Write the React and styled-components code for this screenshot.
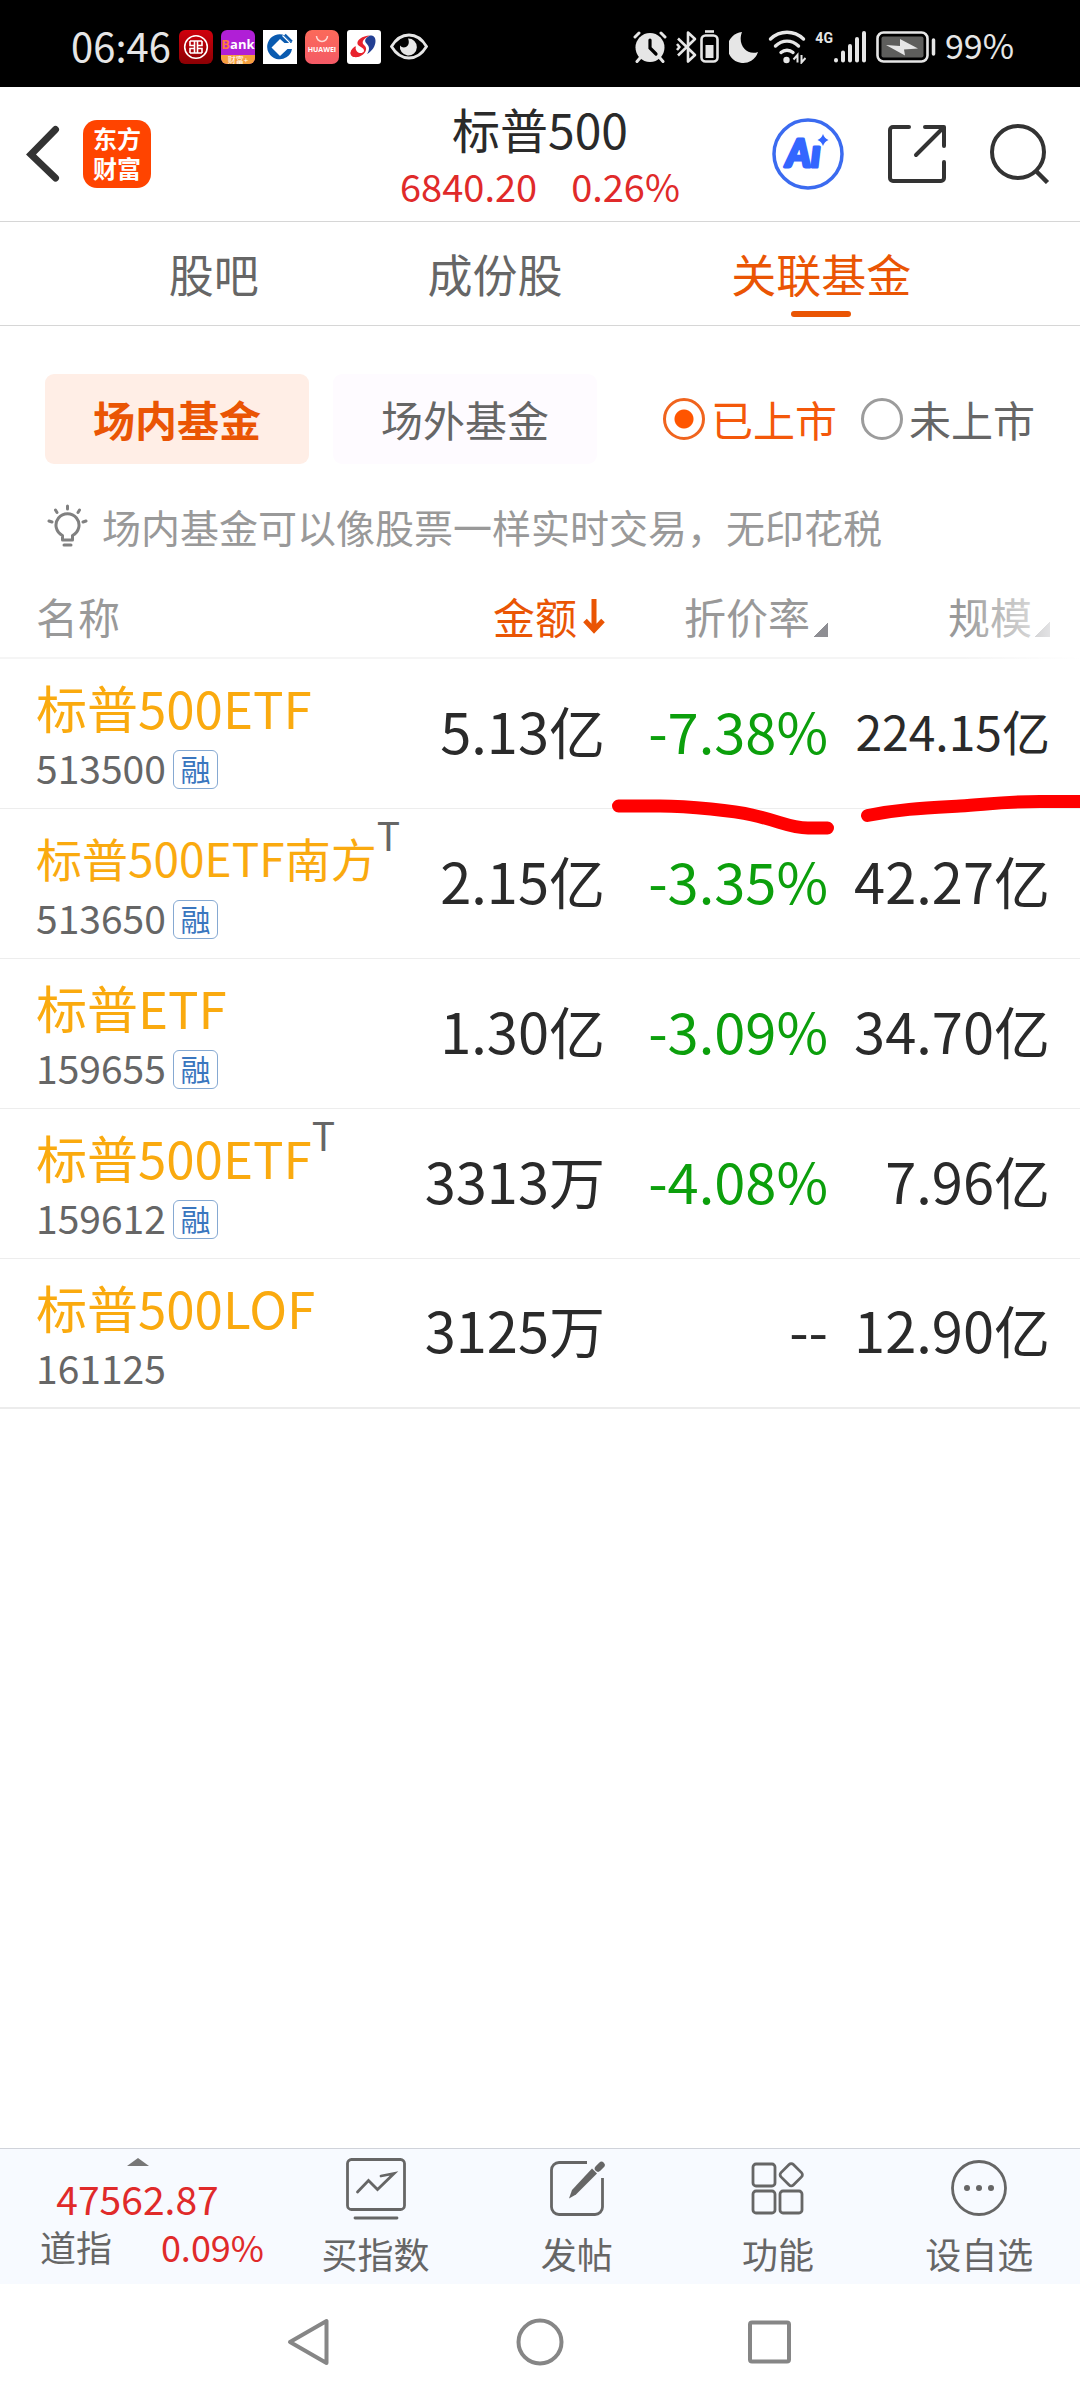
import React, { useState } from "react";
import styled, { createGlobalStyle } from "styled-components";

const orange = "#ea5504";
const red = "#e02a2a";
const grey = "#666666";

const GlobalStyle = createGlobalStyle`
  *, *::before, *::after { box-sizing: border-box; }
  body { margin: 0; background: #ffffff; }
  body, button, input { font-family: "Noto Sans CJK SC", "Noto Sans", sans-serif; }
  button { border: 0; padding: 0; margin: 0; background: none; color: inherit; cursor: pointer; }
  svg { display: block; flex: none; }
`;

const Page = styled.div`
  display: flex;
  flex-direction: column;
  min-height: 100vh;
  background: #ffffff;
  color: #2a2a2a;
  white-space: nowrap;
`;

/* ---------- status bar ---------- */

const StatusBar = styled.div`
  display: flex;
  justify-content: space-between;
  height: 87px;
  padding: 6px 66px 0 71px;
  background: #000000;
  color: #e6e6e6;
`;

const StatusGroup = styled.div`
  display: flex;
  align-items: center;
  gap: ${(p) => p.$gap}px;
`;

const Clock = styled.time`
  font-size: 40px;
  line-height: 44px;
  padding-bottom: 4px;
`;

const BatteryLevel = styled.span`
  font-size: 34px;
  line-height: 44px;
  padding-bottom: 4px;
`;

const AppTile = styled.span`
  display: flex;
  flex-direction: column;
  align-items: center;
  justify-content: ${(p) => p.$justify || "center"};
  width: 34px;
  height: 34px;
  overflow: hidden;
  border-radius: ${(p) => p.$radius}px;
  background: ${(p) => p.$bg};
  color: #ffffff;
`;

const BankWord = styled.span`
  font: 700 13px/22px "Open Sans", sans-serif;
  padding-top: 3px;
`;

const BankInitial = styled.span`
  color: #ff7a3c;
`;

const BankStrip = styled.span`
  width: 100%;
  font-size: 8px;
  line-height: 9px;
  text-align: center;
  background: #f5a03c;
`;

const HuaweiWord = styled.span`
  font: 700 7px/8px "Open Sans", sans-serif;
`;

const SignalGroup = styled.div`
  display: flex;
  align-items: flex-start;
`;

const Network = styled.span`
  font: 700 14px/16px Roboto, sans-serif;
`;

/* ---------- title bar ---------- */

const TitleBar = styled.header`
  display: grid;
  grid-template-columns: 1fr auto 1fr;
  align-items: center;
  height: 135px;
  padding: 0 26px;
  border-bottom: 1px solid #d6d6d6;
`;

const TitleSide = styled.div`
  display: flex;
  align-items: center;
  justify-content: ${(p) => (p.$end ? "flex-end" : "flex-start")};
  gap: ${(p) => p.$gap}px;
  padding-right: ${(p) => (p.$end ? 4 : 0)}px;
`;

const BrandLogo = styled.a`
  width: 68px;
  height: 68px;
  padding-top: 5px;
  border-radius: 14px;
  background: #ff4400;
  color: #ffffff;
  font-family: "Liberation Sans", "Noto Sans CJK SC", sans-serif;
  font-size: 24px;
  font-weight: 700;
  line-height: 30px;
  text-align: center;
  text-decoration: none;
`;

const TitleBlock = styled.div`
  display: flex;
  flex-direction: column;
  align-items: center;
  gap: 8px;
`;

const Title = styled.h1`
  margin: 0;
  font-size: 48px;
  font-weight: 400;
  line-height: 56px;
`;

const Quote = styled.div`
  display: flex;
  gap: 34px;
  color: ${red};
  font-size: 38px;
  line-height: 44px;
`;

/* ---------- tabs ---------- */

const Tabs = styled.nav`
  display: flex;
  justify-content: space-evenly;
  height: 104px;
  border-bottom: 1px solid #d6d6d6;
`;

const Tab = styled.button`
  position: relative;
  color: ${(p) => (p.$active ? orange : grey)};
  font-size: 45px;
  line-height: 60px;

  &::after {
    content: "";
    display: ${(p) => (p.$active ? "block" : "none")};
    position: absolute;
    bottom: 8px;
    left: 50%;
    width: 60px;
    height: 6px;
    margin-left: -30px;
    border-radius: 3px;
    background: ${orange};
  }
`;

/* ---------- filters ---------- */

const Filters = styled.div`
  display: flex;
  align-items: center;
  justify-content: space-between;
  padding: 48px 45px 0;
`;

const FilterGroup = styled.div`
  display: flex;
  gap: 24px;
`;

const Pill = styled.button`
  width: 264px;
  height: 90px;
  border-radius: 9px;
  background: ${(p) => (p.$active ? "#ffeee6" : "#fefbff")};
  color: ${(p) => (p.$active ? orange : grey)};
  font-size: 42px;
  font-weight: ${(p) => (p.$active ? 700 : 400)};
  line-height: 60px;
`;

const RadioLabel = styled.label`
  display: flex;
  align-items: center;
  gap: 6px;
  color: ${(p) => (p.$active ? "#f4580a" : grey)};
  font-size: 42px;
  line-height: 60px;
`;

const Radio = styled.input`
  appearance: none;
  width: 42px;
  height: 42px;
  margin: 0;
  border: 3px solid #9c9c9c;
  border-radius: 50%;

  &:checked {
    border-color: #f0641e;
    background: radial-gradient(circle, #ff5500 9px, transparent 10px);
  }
`;

const Hint = styled.p`
  display: flex;
  align-items: center;
  gap: 13px;
  margin: 0;
  padding: 38px 45px 24px;
  color: #999999;
  font-size: 39px;
  line-height: 48px;
`;

/* ---------- fund table ---------- */

const Main = styled.main`
  flex: 1;
`;

const TableArea = styled.section`
  position: relative;
  overflow: hidden;
`;

const FundTable = styled.table`
  width: 100%;
  table-layout: fixed;
  border-spacing: 0;
`;

const HeadCell = styled.th`
  width: ${(p) => p.$width || "auto"};
  height: 85px;
  padding: 0 ${(p) => p.$right || 0}px 0 ${(p) => p.$left || 0}px;
  border-bottom: 2px solid #f5f5f5;
  color: #999999;
  font-size: 42px;
  font-weight: 400;
  line-height: 60px;
  text-align: left;
`;

const SortButton = styled.button`
  display: flex;
  align-items: center;
  gap: ${(p) => (p.$active ? 6 : 3)}px;
  margin-left: auto;
  color: ${(p) => (p.$active ? orange : "#999999")};
  font-size: 42px;
  line-height: 60px;
`;

const Corner = styled.span`
  align-self: flex-end;
  width: 15px;
  height: 15px;
  margin-bottom: 9px;
  background: linear-gradient(135deg, transparent 50%, #8e8e93 50%);
`;

const HeadFade = styled.div`
  position: absolute;
  top: 0;
  right: 0;
  width: 120px;
  height: 85px;
  background: linear-gradient(90deg, rgba(255, 255, 255, 0), #ffffff);
  pointer-events: none;
`;

const Row = styled.tr`
  &:last-child td { border-bottom: 2px solid #ececec; }
`;

const NameCell = styled.td`
  height: 150px;
  padding: 0 0 0 36px;
  border-bottom: 1px solid #ededed;
  vertical-align: top;
`;

const NameLine = styled.div`
  display: flex;
  align-items: flex-end;
  height: 78px;
`;

const FundName = styled.a`
  color: #faaa0f;
  font-size: ${(p) => (p.$long ? 46 : 51)}px;
  line-height: 60px;
  text-decoration: none;
`;

const TradeMark = styled.span`
  align-self: flex-start;
  color: ${grey};
  font-size: 39px;
  line-height: 50px;
`;

const CodeLine = styled.div`
  display: flex;
  align-items: center;
  gap: 7px;
  padding-top: 6px;
  color: ${grey};
  font-size: 39px;
  line-height: 48px;
`;

const Badge = styled.span`
  width: 45px;
  height: 39px;
  margin-top: 5px;
  border: 1px solid #86a9d2;
  border-radius: 6px;
  color: #3a76be;
  font-size: 30px;
  line-height: 34px;
  text-align: center;
`;

const ValueCell = styled.td`
  height: 150px;
  padding: 0 ${(p) => p.$right || 0}px 8px 0;
  border-bottom: 1px solid #ededed;
  color: ${(p) => (p.$down ? "#0c9f0c" : "#2a2a2a")};
  font-size: ${(p) => (p.$long ? 48 : 56)}px;
  line-height: 64px;
  text-align: right;
`;

const MarkerStrokes = styled.svg`
  position: absolute;
  top: 216px;
  right: 0;
  pointer-events: none;
`;

/* ---------- bottom bar ---------- */

const BottomBar = styled.footer`
  display: flex;
  height: 136px;
  border-top: 1px solid #d0d3da;
  background: #f7faff;
`;

const IndexPanel = styled.button`
  display: flex;
  flex-direction: column;
  align-items: center;
  width: 275px;
  padding-top: 9px;
  font-size: 39px;
  line-height: 44px;
`;

const IndexValue = styled.span`
  padding-top: 10px;
  color: ${red};
`;

const IndexLine = styled.span`
  display: flex;
  justify-content: space-between;
  width: 100%;
  padding: 4px 11px 0 40px;
  color: ${grey};
  font-size: 36px;
`;

const Rise = styled.span`
  color: ${red};
`;

const Action = styled.button`
  display: flex;
  flex: 1;
  flex-direction: column;
  align-items: center;
  gap: 11px;
  padding-top: 9px;
  color: ${grey};
  font-size: 36px;
  line-height: 44px;
`;

const SystemNav = styled.nav`
  display: flex;
  align-items: center;
  justify-content: center;
  gap: 182px;
  height: 116px;
`;

/* ---------- data ---------- */

const funds = [
  { name: "标普500ETF", code: "513500", margin: true, amount: "5.13亿", rate: "-7.38%", size: "224.15亿" },
  { name: "标普500ETF南方", code: "513650", margin: true, mark: true, amount: "2.15亿", rate: "-3.35%", size: "42.27亿" },
  { name: "标普ETF", code: "159655", margin: true, amount: "1.30亿", rate: "-3.09%", size: "34.70亿" },
  { name: "标普500ETF", code: "159612", margin: true, mark: true, amount: "3313万", rate: "-4.08%", size: "7.96亿" },
  { name: "标普500LOF", code: "161125", amount: "3125万", rate: "--", size: "12.90亿" },
];

const actions = [
  {
    label: "买指数",
    icon: (
      <g>
        <rect x="1.5" y="1.5" width="57" height="50" rx="4" />
        <path d="M9 60h42" strokeLinecap="round" />
        <path d="M11.500 34 22.500 22.500 31.500 31.500 48 15.500 35 18" strokeLinecap="round" />
      </g>
    ),
  },
  {
    label: "发帖",
    icon: (
      <g>
        <path d="M40 4.500H12a7.500 7.500 0 0 0-7.500 7.500v37a7.500 7.500 0 0 0 7.500 7.500h36a7.500 7.500 0 0 0 7.500-7.500V20" />
        <path d="M45 10.500 50 15.500 29 36.500 22 40.500 25 32z" fill={grey} stroke="none" />
        <path d="M51 10.500 54.500 7" strokeWidth="6.500" strokeLinecap="round" />
      </g>
    ),
  },
  {
    label: "功能",
    icon: (
      <g>
        <rect x="5" y="6" width="22" height="22" rx="3" />
        <rect x="5" y="33" width="22" height="22" rx="3" />
        <rect x="32" y="33" width="22" height="22" rx="3" />
        <rect x="34.500" y="8" width="17.500" height="17.500" rx="3" transform="rotate(45 43.250 16.750)" />
      </g>
    ),
  },
  {
    label: "设自选",
    icon: (
      <g>
        <circle cx="30" cy="30" r="26.500" />
        <g fill={grey} stroke="none">
          <circle cx="18" cy="30" r="3" />
          <circle cx="30" cy="30" r="3" />
          <circle cx="42" cy="30" r="3" />
        </g>
      </g>
    ),
  },
];

/* ---------- status icons ---------- */

function LeftStatus() {
  return (
    <StatusGroup $gap={8}>
      <Clock>06:46</Clock>
      <AppTile $bg="linear-gradient(#d0000c, #8c0004)" $radius={6}>
        <svg width="26" height="26" viewBox="0 0 26 26" fill="none" stroke="#fff">
          <circle cx="13" cy="13" r="11.300" strokeWidth="1.600" />
          <path d="M7 7h12M7 19h12M7 7v4.500h4.500V7M19 7v4.500h-4.500V7M7 19v-4.500h4.500V19M19 19v-4.500h-4.500V19M11.500 11.500v3M14.500 11.500v3" strokeWidth="1.600" />
        </svg>
      </AppTile>
      <AppTile $bg="#b01fd6" $radius={6} $justify="space-between">
        <BankWord>
          <BankInitial>B</BankInitial>ank
        </BankWord>
        <BankStrip>财富+</BankStrip>
      </AppTile>
      <AppTile $bg="#ffffff" $radius={0}>
        <svg width="34" height="34" viewBox="0 0 34 34">
          <path d="M22 5.500A12.500 12.500 0 1 0 29 19H24.500L17 26 8.500 17.500 17 9l4.500 4H29z" fill="#0a5bb0" />
          <path d="M17 24 10.500 17.500 17 11l6.500 6.500z" fill="#fff" />
          <path d="M19.500 5.500 27 13M23 4.500l6 6" stroke="#fff" strokeWidth="1.200" />
          <path d="M22 4.500l7 7" stroke="#0a5bb0" strokeWidth="2" />
        </svg>
      </AppTile>
      <AppTile $bg="linear-gradient(#fb6a5a, #f45a66)" $radius={7} $justify="flex-start">
        <svg width="34" height="16" viewBox="0 0 34 16" fill="none" stroke="#ffd9d4" strokeWidth="1.500">
          <path d="M11.500 6a5.500 5.500 0 0 0 11 0" />
        </svg>
        <HuaweiWord>HUAWEI</HuaweiWord>
      </AppTile>
      <AppTile $bg="#ffffff" $radius={3}>
        <svg width="34" height="34" viewBox="0 0 34 34">
          <path d="M23 5.500C15 6 9.500 10 10.500 14c1 3 7 3.500 6.500 7-.5 2.500-5 3-8 1.500-2-1-2-3 0-6C4 19 2.500 23 4.500 25.500 7 28.500 13 27 16 24.500c4-3.500 4-7 1-9.500-3-2.500-1-6.500 6-9.500z" fill="#e8222d" />
          <path d="M8.500 16C4 19 2.500 23 4.500 25.500 7 28.500 14 27 17 22c-2 2-9 2-8.500-6z" fill="#e8222d" />
          <path d="M23 5.500c-5 2.500-6 5.500-3.500 8 3 3 3.500 6 .5 10.500 5-2.500 8.500-8 8.500-13 0-3.500-1.500-5.500-5.500-5.500z" fill="#233f93" />
        </svg>
      </AppTile>
      <svg width="40" height="34" viewBox="0 0 40 34">
        <path d="M2.500 16.500C7 9 13 5 20 5s13 4 17.500 11.500C33 24 27 28 20 28S7 24 2.500 16.500z" fill="none" stroke="#e6e6e6" strokeWidth="2.800" />
        <path d="M19 8.500a8.500 8.500 0 1 1-8 7c1.500 2 4 2.500 6 1.500 3-1.500 3.500-5 2-8.500z" fill="#e6e6e6" />
      </svg>
    </StatusGroup>
  );
}

function RightStatus() {
  return (
    <StatusGroup $gap={9}>
      <svg width="34" height="34" viewBox="0 0 34 34" fill="none" stroke="#e6e6e6" strokeLinecap="round">
        <circle cx="17" cy="17.500" r="14.500" fill="#e6e6e6" stroke="none" />
        <path d="M2 7 6 3M28 3l4 4M7 28l-3 3.500M27 28l3 3.500" strokeWidth="3" />
        <path d="M17 10v8l6 6" stroke="#000" strokeWidth="3.200" />
      </svg>
      <svg width="44" height="34" viewBox="0 0 44 34" fill="none" stroke="#e6e6e6" strokeWidth="2.600" strokeLinejoin="round">
        <path d="M2 8.500 19 25l-7 6.500V2.500L19 9 2 25.500M1 14l2.500 3L1 20" />
        <rect x="25.500" y="5.500" width="16" height="26" rx="4" />
        <path d="M29 1.500h9" />
        <path d="M29.500 15h8v13h-8z" fill="#e6e6e6" stroke="none" />
      </svg>
      <svg width="30" height="34" viewBox="0 0 30 34">
        <path d="M13 2A15.500 15.500 0 1 0 29 22C18 26 8 15 13 2z" fill="#e6e6e6" />
      </svg>
      <svg width="38" height="34" viewBox="0 0 38 34" fill="none" stroke="#e6e6e6" strokeWidth="3.400" strokeLinecap="round">
        <path d="M2.500 9C12 0 26 0 35.500 9M7.500 16c7-6.500 16-6.500 23 0M13 22.500c3.500-3 8.500-3 12 0" />
        <circle cx="18.500" cy="30" r="3.200" fill="#e6e6e6" stroke="none" />
        <path d="M29.500 32.500V25l-4 4.500M33.500 25v7.500l4-4.500" strokeWidth="2" strokeLinecap="butt" />
      </svg>
      <SignalGroup>
        <Network>4G</Network>
        <svg width="34" height="34" viewBox="0 0 34 34" stroke="#e6e6e6" strokeWidth="4" strokeLinecap="round">
          <path d="M3 30v.5M10 22.500v8M17 16v14.500M24 9v21.500M31 3v27.500" />
        </svg>
      </SignalGroup>
      <svg width="60" height="34" viewBox="0 0 60 34">
        <rect x="1.500" y="2.500" width="50" height="29" rx="6" fill="none" stroke="#e6e6e6" strokeWidth="2.600" />
        <rect x="5.500" y="6.500" width="42" height="21" rx="2" fill="#5e5e5c" />
        <path d="M10 15l14 1 0-7 18 9.500-14 1 1 6z" fill="#e6e6e6" />
        <path d="M57.500 10v14" stroke="#e6e6e6" strokeWidth="3.500" strokeLinecap="round" />
      </svg>
      <BatteryLevel>99%</BatteryLevel>
    </StatusGroup>
  );
}

export default function App() {
  const [venue, setVenue] = useState("in");
  const [listed, setListed] = useState("yes");

  return (
    <Page>
      <GlobalStyle />
      <StatusBar>
        <LeftStatus />
        <RightStatus />
      </StatusBar>

      <TitleBar>
        <TitleSide $gap={23}>
          <button aria-label="返回">
            <svg width="34" height="60" viewBox="0 0 34 60" fill="none" stroke="#333" strokeWidth="7" strokeLinecap="round">
              <path d="M29.500 5.500 5 30.500 29.500 54" strokeLinejoin="miter" />
            </svg>
          </button>
          <BrandLogo href="#home">
            东方
            <br />
            财富
          </BrandLogo>
        </TitleSide>
        <TitleBlock>
          <Title>标普500</Title>
          <Quote>
            <span>6840.20</span>
            <span>0.26%</span>
          </Quote>
        </TitleBlock>
        <TitleSide $end $gap={44}>
          <button aria-label="智能助手">
            <svg width="72" height="72" viewBox="0 0 72 72">
              <circle cx="36" cy="36" r="34" fill="none" stroke="#3b6bf0" strokeWidth="3.500" />
              <text x="14" y="49" fill="#3366ff" stroke="#3366ff" strokeWidth="3" strokeLinejoin="round" fontFamily="Lato, sans-serif" fontWeight="900" fontStyle="italic" fontSize="38">
                Aı
              </text>
              <path d="M51 16q1.500 4.500 5.500 6-4 1.500-5.500 6-1.500-4.500-5.500-6 4-1.500 5.500-6z" fill="#3366ff" />
            </svg>
          </button>
          <button aria-label="分享">
            <svg width="58" height="58" viewBox="0 0 58 58" fill="none" stroke="#333" strokeWidth="4" strokeLinecap="round" strokeLinejoin="round">
              <path d="M21 2H5a3 3 0 0 0-3 3v48a3 3 0 0 0 3 3h48a3 3 0 0 0 3-3V37M37 2h19v19M55 3 28 30" />
            </svg>
          </button>
          <button aria-label="搜索">
            <svg width="60" height="60" viewBox="0 0 60 60" fill="none" stroke="#333" strokeWidth="4">
              <circle cx="28" cy="28" r="26" />
              <path d="M46 47 57.500 58.500" strokeWidth="4.500" />
            </svg>
          </button>
        </TitleSide>
      </TitleBar>

      <Tabs>
        <Tab>股吧</Tab>
        <Tab>成份股</Tab>
        <Tab $active>关联基金</Tab>
      </Tabs>

      <Main>
        <Filters>
          <FilterGroup>
            <Pill $active={venue === "in"} onClick={() => setVenue("in")}>场内基金</Pill>
            <Pill $active={venue === "out"} onClick={() => setVenue("out")}>场外基金</Pill>
          </FilterGroup>
          <FilterGroup>
            <RadioLabel $active={listed === "yes"}>
              <Radio type="radio" name="listed" checked={listed === "yes"} onChange={() => setListed("yes")} />
              已上市
            </RadioLabel>
            <RadioLabel $active={listed === "no"}>
              <Radio type="radio" name="listed" checked={listed === "no"} onChange={() => setListed("no")} />
              未上市
            </RadioLabel>
          </FilterGroup>
        </Filters>

        <Hint>
          <svg width="44" height="44" viewBox="0 0 44 44" fill="none" stroke="#808080" strokeWidth="3" strokeLinecap="round" strokeLinejoin="round">
            <path d="M17.500 36v-4.500a11.500 11.500 0 1 1 10 0V36zM19 41h7M22.500 2v3M10.500 6l1.500 2.500M34.500 6 33 8.500M4 17l3 1M41 17l-3 1" />
          </svg>
          场内基金可以像股票一样实时交易，无印花税
        </Hint>

        <TableArea>
          <FundTable>
            <thead>
              <tr>
                <HeadCell $left={36}>名称</HeadCell>
                <HeadCell $width="205px">
                  <SortButton $active>
                    金额
                    <svg width="22" height="38" viewBox="0 0 22 38" fill="none" stroke={orange} strokeWidth="5">
                      <path d="M11 2v31M2 23.500l9 9.500 9-9.500" />
                    </svg>
                  </SortButton>
                </HeadCell>
                <HeadCell $width="223px">
                  <SortButton>
                    折价率
                    <Corner />
                  </SortButton>
                </HeadCell>
                <HeadCell $width="252px" $right={30}>
                  <SortButton>
                    规模
                    <Corner />
                  </SortButton>
                </HeadCell>
              </tr>
            </thead>
            <tbody>
              {funds.map((f) => (
                <Row key={f.code}>
                  <NameCell>
                    <NameLine>
                      <FundName href={"#" + f.code} $long={f.name.length > 8}>{f.name}</FundName>
                      {f.mark && <TradeMark>T</TradeMark>}
                    </NameLine>
                    <CodeLine>
                      {f.code}
                      {f.margin && <Badge>融</Badge>}
                    </CodeLine>
                  </NameCell>
                  <ValueCell>{f.amount}</ValueCell>
                  <ValueCell $down={f.rate !== "--"}>{f.rate}</ValueCell>
                  <ValueCell $right={30} $long={f.size.length > 6}>{f.size}</ValueCell>
                </Row>
              ))}
            </tbody>
          </FundTable>
          <HeadFade />
          <MarkerStrokes width="480" height="50" viewBox="600 790 480 50" fill="none" stroke="#ff0000" strokeWidth="13" strokeLinecap="round">
            <path d="M618.500 806H660C690 806 735 811 752 815C780 821 790 828 808 828H827.500" />
            <path d="M867.500 815.500C900 809 925 808 960 806C990 804 1005 801.500 1040 801.500H1090" />
          </MarkerStrokes>
        </TableArea>
      </Main>

      <BottomBar>
        <IndexPanel>
          <svg width="22" height="8" viewBox="0 0 22 8">
            <path d="M0 8 11 0l11 8z" fill="#777" />
          </svg>
          <IndexValue>47562.87</IndexValue>
          <IndexLine>
            道指
            <Rise>0.09%</Rise>
          </IndexLine>
        </IndexPanel>
        {actions.map((a) => (
          <Action key={a.label}>
            <svg width="60" height="62" viewBox="0 0 60 62" fill="none" stroke={grey} strokeWidth="2.800">
              {a.icon}
            </svg>
            {a.label}
          </Action>
        ))}
      </BottomBar>

      <SystemNav>
        <button aria-label="后退">
          <svg width="48" height="48" viewBox="0 0 48 48" fill="none" stroke="#868686" strokeWidth="4" strokeLinejoin="round">
            <path d="M40.500 3v42L4 24z" />
          </svg>
        </button>
        <button aria-label="主页">
          <svg width="48" height="48" viewBox="0 0 48 48" fill="none" stroke="#868686" strokeWidth="4">
            <circle cx="24" cy="24" r="21.500" />
          </svg>
        </button>
        <button aria-label="最近任务">
          <svg width="48" height="48" viewBox="0 0 48 48" fill="none" stroke="#868686" strokeWidth="4">
            <rect x="4" y="4.500" width="39" height="39" rx="2" />
          </svg>
        </button>
      </SystemNav>
    </Page>
  );
}
